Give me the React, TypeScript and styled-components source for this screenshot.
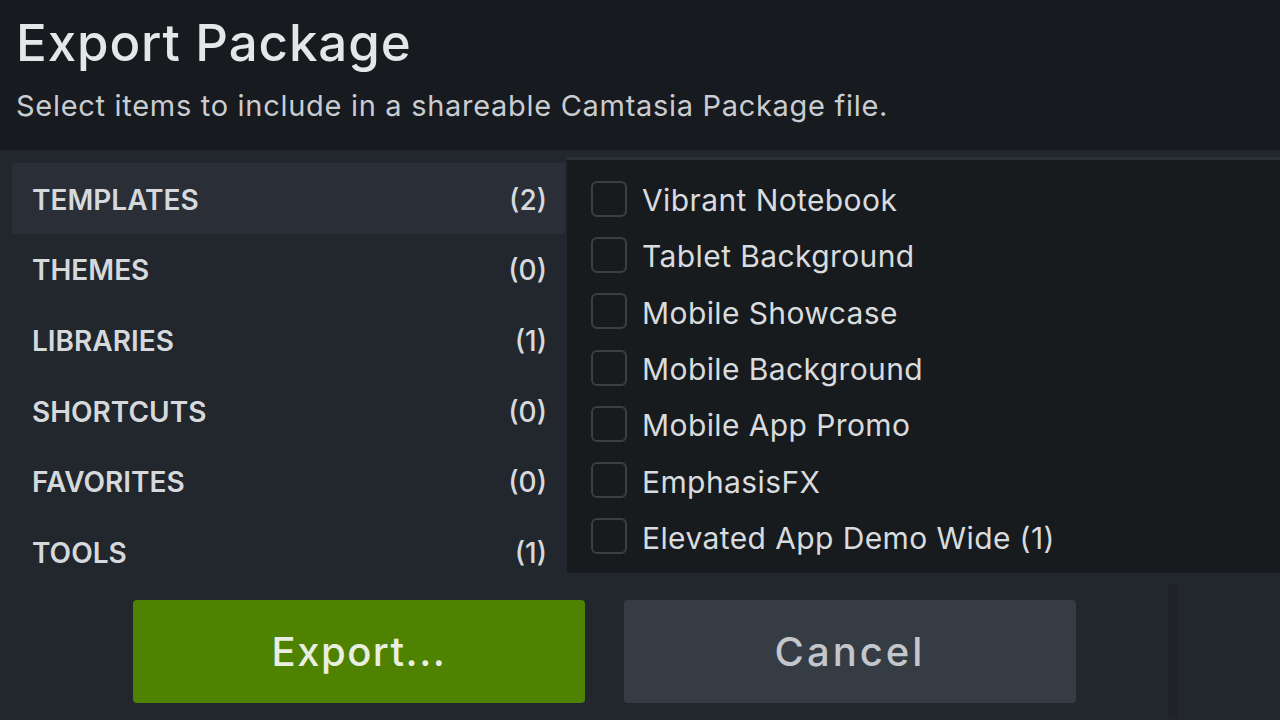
import React, { useState } from "react";
import styled, { createGlobalStyle } from "styled-components";

const GlobalStyle = createGlobalStyle`
  html, body {
    margin: 0;
    padding: 0;
    background-color: #22262d;
  }
  body {
    font-family: Inter, "Liberation Sans", sans-serif;
    overflow: hidden;
  }
`;

const Dialog = styled.div`
  width: 1280px;
  height: 720px;
  display: flex;
  flex-direction: column;
  background-color: #22262d;
`;

const Header = styled.header`
  height: 150px;
  box-sizing: border-box;
  padding: 14px 16px 0;
  background-color: #171a1e;
`;

const Title = styled.h1`
  margin: 0;
  font-size: 51px;
  font-weight: 500;
  line-height: 58px;
  letter-spacing: 0.9px;
  color: #e4e6e8;
`;

const Subtitle = styled.p`
  margin: 17px 0 0;
  font-size: 29px;
  font-weight: 400;
  line-height: 34px;
  letter-spacing: 0.7px;
  color: #c9ccd0;
`;

const Content = styled.div`
  height: 436px;
  display: flex;
  align-items: flex-start;
  gap: 2px;
  padding-left: 12px;
`;

const CategoryList = styled.ul`
  list-style: none;
  margin: 13px 0 0;
  padding: 0;
  width: 553px;
`;

const CategoryRow = styled.li<{ $active?: boolean }>`
  height: 70.6px;
  display: flex;
  align-items: center;
  justify-content: space-between;
  padding: 3px 20px 0;
  box-sizing: border-box;
  background-color: ${(p) => (p.$active ? "#2a2f37" : "transparent")};
  color: #d6d9dc;
  font-size: 28px;
  font-weight: 600;
  cursor: pointer;
`;

const Count = styled.span`
  font-weight: 500;
  margin-right: -2px;
`;

const ItemPanel = styled.div`
  flex: 1;
  height: 416px;
  margin-top: 7px;
  box-sizing: border-box;
  border-top: 3px solid #2b2f36;
  background-color: #181b1e;
  padding: 12px 0 0 24px;
`;

const ItemRow = styled.label`
  height: 56.3px;
  display: flex;
  align-items: center;
  gap: 15px;
  color: #d9dcdf;
  font-size: 30px;
  font-weight: 400;
  letter-spacing: 0.4px;
  cursor: pointer;
`;

const Box = styled.span<{ $checked: boolean }>`
  width: 36px;
  height: 36px;
  margin-top: -3px;
  box-sizing: border-box;
  border: 2px solid #3a3f45;
  border-radius: 6px;
  background-color: ${(p) => (p.$checked ? "#4f8200" : "transparent")};
  flex-shrink: 0;
`;

const Footer = styled.footer`
  flex: 1;
  display: flex;
  align-items: flex-start;
  padding-left: 133px;
`;

const Button = styled.button<{ $primary?: boolean }>`
  width: 452px;
  height: 103px;
  margin-top: 14px;
  margin-right: 39px;
  border: none;
  border-radius: 4px;
  background-color: ${(p) => (p.$primary ? "#4f8200" : "#363c44")};
  color: ${(p) => (p.$primary ? "#e9efe0" : "#c3c7cc")};
  font-family: Inter, "Liberation Sans", sans-serif;
  font-size: 40px;
  font-weight: 500;
  letter-spacing: ${(p) => (p.$primary ? "1.5px" : "3px")};
  cursor: pointer;
`;

const Divider = styled.div`
  width: 10px;
  height: 133px;
  margin-top: -2px;
  margin-left: 53px;
  background-color: #202326;
`;

const categories = [
  { name: "TEMPLATES", count: 2 },
  { name: "THEMES", count: 0 },
  { name: "LIBRARIES", count: 1 },
  { name: "SHORTCUTS", count: 0 },
  { name: "FAVORITES", count: 0 },
  { name: "TOOLS", count: 1 },
];

const templates = [
  "Vibrant Notebook",
  "Tablet Background",
  "Mobile Showcase",
  "Mobile Background",
  "Mobile App Promo",
  "EmphasisFX",
  "Elevated App Demo Wide (1)",
];

const App = () => {
  const [active, setActive] = useState("TEMPLATES");
  const [checked, setChecked] = useState<string[]>([]);

  const toggle = (name: string) => {
    setChecked((prev) =>
      prev.includes(name) ? prev.filter((n) => n !== name) : [...prev, name]
    );
  };

  return (
    <Dialog>
      <GlobalStyle />
      <Header>
        <Title>Export Package</Title>
        <Subtitle>Select items to include in a shareable Camtasia Package file.</Subtitle>
      </Header>
      <Content>
        <CategoryList>
          {categories.map((c) => (
            <CategoryRow
              key={c.name}
              $active={active === c.name}
              onClick={() => setActive(c.name)}
            >
              <span>{c.name}</span>
              <Count>({c.count})</Count>
            </CategoryRow>
          ))}
        </CategoryList>
        <ItemPanel>
          {templates.map((t) => (
            <ItemRow key={t} onClick={() => toggle(t)}>
              <Box $checked={checked.includes(t)} />
              {t}
            </ItemRow>
          ))}
        </ItemPanel>
      </Content>
      <Footer>
        <Button $primary>Export...</Button>
        <Button>Cancel</Button>
        <Divider />
      </Footer>
    </Dialog>
  );
};

export default App;
